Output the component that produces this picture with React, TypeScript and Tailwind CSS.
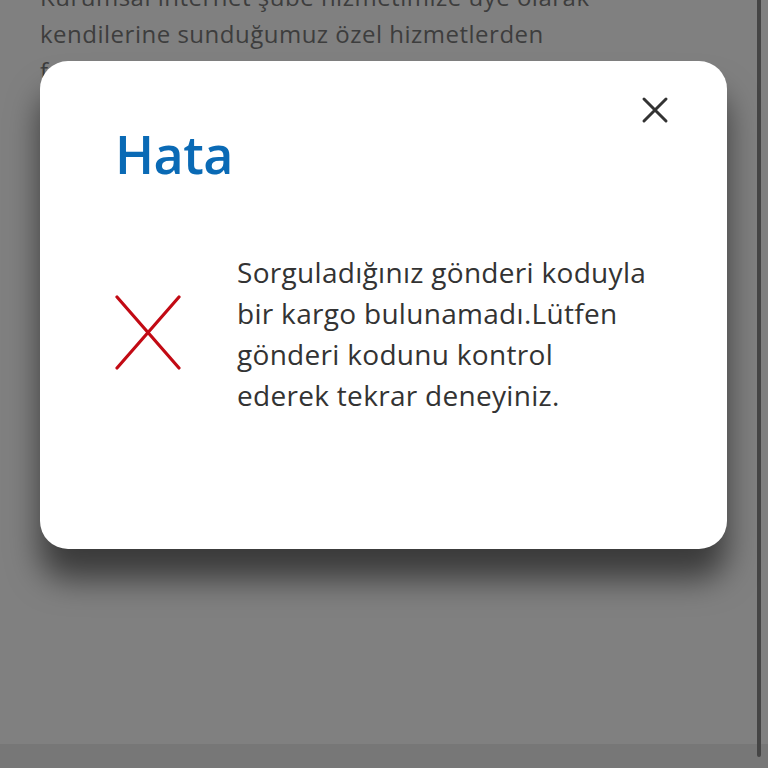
import React from 'react';

const CloseIcon = () => (
  <svg width="28" height="28" viewBox="0 0 28 28" fill="none">
    <path d="M3 3L25 25M25 3L3 25" stroke="#333333" strokeWidth="3" strokeLinecap="round" />
  </svg>
);

const ErrorCross = () => (
  <svg width="66" height="75" viewBox="0 0 66 75" fill="none">
    <path d="M2 2L64 73M64 2L2 73" stroke="#c20a14" strokeWidth="3.2" strokeLinecap="round" />
  </svg>
);

const App: React.FC = () => {
  return (
    <div
      className="relative w-[768px] h-[768px] overflow-hidden bg-[#808080] flex flex-col"
      style={{ fontFamily: '"Open Sans", "Noto Sans", sans-serif' }}
    >
      {/* Dimmed page behind the dialog */}
      <div className="flex-1 px-10 -mt-[22px] text-[24px] leading-[37px] text-[#3d3d3d] tracking-[0.5px]">
        <p>
          Kurumsal internet şube hizmetimize üye olarak
          <br />
          kendilerine sunduğumuz özel hizmetlerden
          <br />
          faydalanabilirler.
        </p>
      </div>
      <div className="h-[24px] bg-[#777777]" />

      {/* Scrollbar */}
      <div className="absolute right-[7px] top-0 w-[4px] h-[757px] rounded-b bg-[#454545]" />

      {/* Dialog */}
      <div className="absolute left-[40px] top-[61px] w-[687px] h-[488px] bg-white rounded-[28px] shadow-[0_30px_32px_rgba(0,0,0,0.55)]">
        <button className="absolute right-[58px] top-[35px] p-0">
          <CloseIcon />
        </button>
        <div className="pl-[75px] pt-[60px]">
          <h2 className="text-[52px] leading-[66px] font-semibold text-[#0a6ab5] tracking-[-0.5px]">Hata</h2>
          <div className="flex items-start mt-[65px]">
            <div className="w-[122px] shrink-0 mt-[43px]">
              <ErrorCross />
            </div>
            <p className="text-[28px] leading-[41px] text-[#333333] tracking-[0.3px]">
              Sorguladığınız gönderi koduyla
              <br />
              bir kargo bulunamadı.Lütfen
              <br />
              gönderi kodunu kontrol
              <br />
              ederek tekrar deneyiniz.
            </p>
          </div>
        </div>
      </div>
    </div>
  );
};

export default App;
